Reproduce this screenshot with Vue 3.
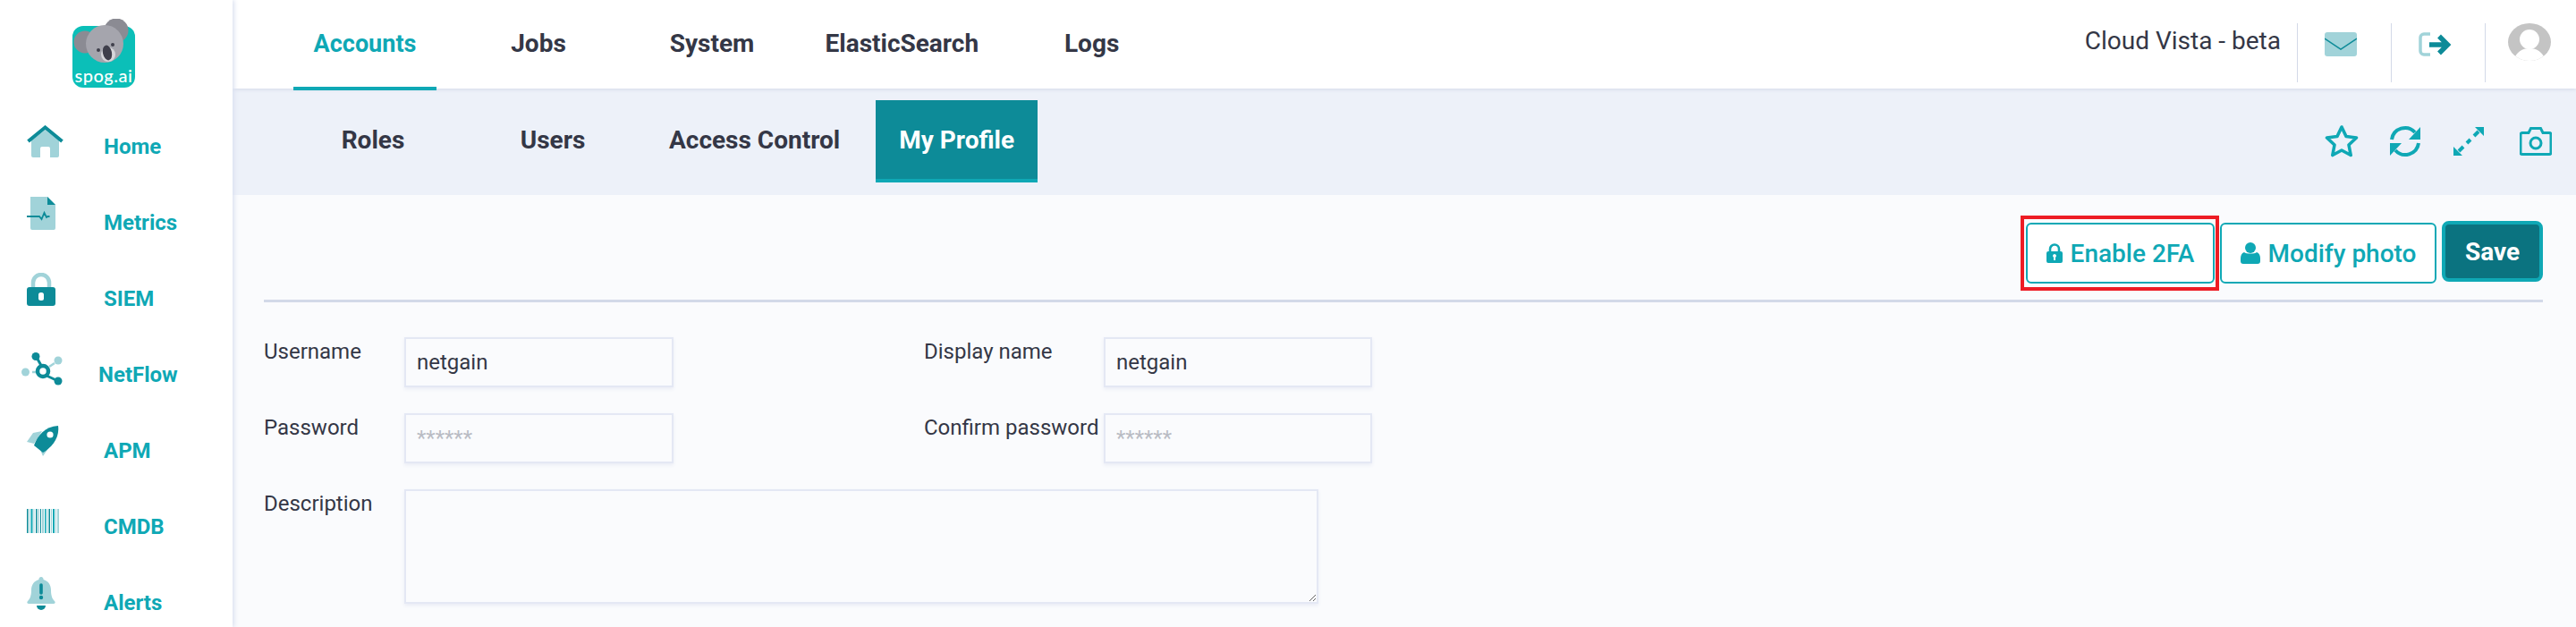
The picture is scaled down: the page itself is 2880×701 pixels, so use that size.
<script setup>
const topTabs = ["Accounts", "Jobs", "System", "ElasticSearch", "Logs"];
const subTabs = ["Roles", "Users", "Access Control", "My Profile"];
const menu = ["Home", "Metrics", "SIEM", "NetFlow", "APM", "CMDB", "Alerts"];

// barcode stripes for the CMDB icon: x, width, colour
const bars = [
  [0, 1.5, "#0d8b98"], [2.5, 1, "#a1d3d9"], [4.5, 2, "#0fa8b5"], [7.5, 1, "#a1d3d9"],
  [10, 1.5, "#0d8b98"], [12.5, 1.5, "#a1d3d9"], [15, 1, "#0d8b98"], [17, 2, "#a1d3d9"],
  [20, 1.5, "#0fa8b5"], [22.5, 1, "#a1d3d9"], [24.5, 1.5, "#0d8b98"], [27, 1, "#a1d3d9"],
  [29, 2, "#0fa8b5"], [32, 1, "#a1d3d9"], [34, 2, "#a1d3d9"],
];
</script>

<template>
  <div class="page">
    <aside class="sidebar">
      <div class="logo">
        <svg width="72" height="78" viewBox="0 0 72 78">
          <rect x="1" y="8" width="70" height="69" rx="12" fill="#0bbfb8" />
          <circle cx="50" cy="13" r="13.500" fill="#8b8b93" />
          <circle cx="15" cy="26" r="12.500" fill="#8b8b93" />
          <circle cx="37" cy="28" r="21" fill="#a5a5ad" />
          <circle cx="30" cy="35" r="2" fill="#3f3f4b" />
          <circle cx="46" cy="29" r="2" fill="#3f3f4b" />
          <ellipse cx="41" cy="40" rx="8" ry="8" fill="#d6d6da" />
          <ellipse cx="40" cy="38" rx="5" ry="8.500" transform="rotate(-12 40 38)" fill="#3f3f4b" />
          <text x="36" y="71" class="logo-text" text-anchor="middle">spog.ai</text>
        </svg>
      </div>
      <nav class="menu">
        <a v-for="m in menu" :key="m" class="menu-item" :class="'m-' + m.toLowerCase()">
          <span class="menu-icon">
            <svg v-if="m === 'Home'" width="41" height="36" viewBox="0 0 41 36">
              <path d="M5 17 20.5 5.5 36 17v17a2 2 0 0 1-2 2h-8V26a2 2 0 0 0-2-2h-7a2 2 0 0 0-2 2v10H7a2 2 0 0 1-2-2z" fill="#a1d3d9" />
              <path d="M1.5 18 20.5 2.5l19 15.500" fill="none" stroke="#0d8b98" stroke-width="4" />
            </svg>
            <svg v-else-if="m === 'Metrics'" width="32" height="37" viewBox="0 0 32 37">
              <path d="M6 0h17l9 9v26a2 2 0 0 1-2 2H6a2 2 0 0 1-2-2V0z" fill="#a1d3d9" />
              <path d="M23 0l9 9h-9z" fill="#0d8b98" />
              <path d="M0 22h14l2.500 3 3-7 2.500 5 1.500-1h2" fill="none" stroke="#0d8b98" stroke-width="1.800" />
            </svg>
            <svg v-else-if="m === 'SIEM'" width="32" height="37" viewBox="0 0 32 37">
              <path d="M7 17V11a9 9 0 0 1 18 0v6" fill="none" stroke="#a1d3d9" stroke-width="4.500" />
              <rect x="0" y="16" width="32" height="21" rx="3" fill="#0d8b98" />
              <rect x="13" y="22" width="6" height="9" rx="2.500" fill="#fff" />
            </svg>
            <svg v-else-if="m === 'NetFlow'" width="46" height="37" viewBox="0 0 46 37">
              <path d="M12 22h6M31 16l6-4" stroke="#a1d3d9" stroke-width="2.500" />
              <circle cx="4.500" cy="22" r="4.500" fill="#a1d3d9" />
              <circle cx="41" cy="9" r="4.500" fill="#a1d3d9" />
              <path d="M16 4l8 14M28 26l13 6" stroke="#0d8b98" stroke-width="3" />
              <circle cx="16" cy="4.500" r="4.500" fill="#0d8b98" />
              <circle cx="41" cy="32" r="4.500" fill="#0d8b98" />
              <circle cx="24" cy="21" r="6" fill="#fff" stroke="#0d8b98" stroke-width="4.500" />
            </svg>
            <svg v-else-if="m === 'APM'" width="36" height="36" viewBox="0 0 36 36">
              <path d="M7 9 17 7 8 21 0 19zM27 22 18 35 15 28z" fill="#a1d3d9" />
              <path d="M8 23C12 12 20 2 35 1 37 14 28 25 18 31z" fill="#0d8b98" />
              <circle cx="26" cy="11" r="3.600" fill="#fff" />
            </svg>
            <svg v-else-if="m === 'CMDB'" width="36" height="27" viewBox="0 0 36 27">
              <rect v-for="(b, i) in bars" :key="i" :x="b[0]" y="0" :width="b[1]" height="27" :fill="b[2]" />
            </svg>
            <svg v-else width="32" height="37" viewBox="0 0 32 37">
              <path d="M16 0a2.500 2.500 0 0 1 2.500 3C24 4.500 27 9 27 15c0 7 2 10 4 12 1 1 1 3-1 3H2c-2 0-2-2-1-3 2-2 4-5 4-12 0-6 3-10.500 8.500-12A2.500 2.500 0 0 1 16 0z" fill="#a1d3d9" />
              <path d="M16 9v9" stroke="#0d8b98" stroke-width="3.600" stroke-linecap="round" />
              <circle cx="16" cy="23" r="2.200" fill="#0d8b98" />
              <path d="M11 32h10a5 5 0 0 1-10 0z" fill="#0d8b98" />
            </svg>
          </span>
          <span class="menu-label">{{ m }}</span>
        </a>
      </nav>
    </aside>

    <div class="main">
      <header class="topbar">
        <nav class="top-tabs">
          <a v-for="(t, i) in topTabs" :key="t" class="top-tab" :class="{ active: i === 0 }">{{ t }}</a>
        </nav>
        <div class="top-right">
          <span class="org">Cloud Vista - beta</span>
          <span class="top-cell">
            <svg width="36" height="27" viewBox="0 0 36 27">
              <rect width="36" height="27" rx="3" fill="#a1d3d9" />
              <path d="M0 7 18 19 36 7" fill="none" stroke="#0d8b98" stroke-width="1.500" />
            </svg>
          </span>
          <span class="top-cell">
            <svg width="37" height="27" viewBox="0 0 37 27">
              <path d="M13 2H6a4 4 0 0 0-4 4v15a4 4 0 0 0 4 4h7" fill="none" stroke="#a1d3d9" stroke-width="3.500" />
              <path d="M12 14h20M23 4.500 32.500 14 23 23.500" fill="none" stroke="#0d8b98" stroke-width="5.500" />
            </svg>
          </span>
          <span class="top-cell avatar-cell">
            <svg width="48" height="42" viewBox="0 0 48 42">
              <defs>
                <clipPath id="avatar-clip"><ellipse cx="24" cy="21" rx="24" ry="21" /></clipPath>
              </defs>
              <g clip-path="url(#avatar-clip)">
                <rect width="48" height="42" fill="#c4c4c4" />
                <ellipse cx="24" cy="18" rx="11" ry="11" fill="#fff" />
                <path d="M6 42C9 32 16 28 24 28s15 4 18 14z" fill="#fff" />
              </g>
            </svg>
          </span>
        </div>
      </header>

      <div class="subbar">
        <nav class="sub-tabs">
          <a v-for="(t, i) in subTabs" :key="t" class="sub-tab" :class="{ active: i === 3 }">{{ t }}</a>
        </nav>
        <div class="sub-icons">
          <svg width="38" height="38" viewBox="0 0 38 38">
            <path d="M19 3l5 10.500 11.500 1.500-8.500 8 2.200 11.500L19 29l-10.200 5.500L11 23l-8.500-8L14 13.500z" fill="none" stroke="#0fa8b5" stroke-width="3.600" stroke-linejoin="round" />
          </svg>
          <svg width="36" height="36" viewBox="0 0 36 36">
            <path d="M3 16A15 15 0 0 1 29 8M33 20A15 15 0 0 1 7 28" fill="none" stroke="#0fa8b5" stroke-width="4" />
            <path d="M35 2v14H22zM1 34V20h13z" fill="#0fa8b5" />
          </svg>
          <svg width="34" height="32" viewBox="0 0 34 32">
            <path d="M24 0h10v10zM10 32H0V22z" fill="#0fa8b5" />
            <path d="M28 5l-5 5M19 14l-4 4M11 22l-5 5" stroke="#0fa8b5" stroke-width="4" fill="none" />
          </svg>
          <svg width="36" height="32" viewBox="0 0 36 32">
            <path d="M3 6.500h7l2.500-5h11l2.500 5h7a2 2 0 0 1 2 2v20a2 2 0 0 1-2 2H3a2 2 0 0 1-2-2v-20a2 2 0 0 1 2-2z" fill="none" stroke="#0fa8b5" stroke-width="3" />
            <circle cx="18" cy="18" r="6" fill="none" stroke="#0fa8b5" stroke-width="3" />
          </svg>
        </div>
      </div>

      <section class="content">
        <div class="toolbar">
          <button class="btn marked">
            <svg width="18" height="22" viewBox="0 0 18 22">
              <path d="M4 10V6.500a5 5 0 0 1 10 0V10" fill="none" stroke="#0fa8b5" stroke-width="2.600" />
              <path d="M2 9h14a2 2 0 0 1 2 2v9a2 2 0 0 1-2 2H2a2 2 0 0 1-2-2v-9a2 2 0 0 1 2-2zm7 3a2 2 0 0 0-1 3.700V19h2v-3.300A2 2 0 0 0 9 12z" fill="#0fa8b5" fill-rule="evenodd" />
            </svg>
            Enable 2FA
          </button>
          <button class="btn modify">
            <svg width="22" height="24" viewBox="0 0 22 24">
              <circle cx="11" cy="6" r="6" fill="#0fa8b5" />
              <path d="M4 11c2 2 12 2 14 0 3 1 4 4 4 7v3a3 3 0 0 1-3 3H3a3 3 0 0 1-3-3v-3c0-3 1-6 4-7z" fill="#0fa8b5" />
            </svg>
            Modify photo
          </button>
          <button class="btn save">Save</button>
        </div>
        <hr class="rule" />
        <form class="form" @submit.prevent>
          <label>Username</label>
          <input type="text" value="netgain" />
          <span></span>
          <label>Display name</label>
          <input type="text" value="netgain" />
          <label>Password</label>
          <input type="password" placeholder="******" />
          <span></span>
          <label>Confirm password</label>
          <input type="password" placeholder="******" />
          <label>Description</label>
          <textarea></textarea>
        </form>
      </section>
    </div>
  </div>
</template>

<style>
html, body {
  margin: 0;
  overflow: hidden;
  background: #fff;
}
</style>

<style scoped>
.page {
  display: flex;
  height: 100vh;
  font-family: Roboto, "Liberation Sans", sans-serif;
  color: #343746;
}
.sidebar {
  width: 260px;
  flex: none;
  background: #fff;
  box-shadow: 2px 0 5px #dbe1f0;
  position: relative;
  z-index: 2;
}
.logo {
  padding: 21px 0 0 80px;
  height: 100px;
  line-height: 0;
}
.logo-text {
  font-family: Lato, Roboto, sans-serif;
  font-size: 20px;
  font-weight: 500;
  letter-spacing: 0.5px;
  fill: #fff;
}
.menu {
  display: flex;
  flex-direction: column;
}
.menu-item {
  position: relative;
  height: 85px;
  display: flex;
  align-items: center;
  padding-left: 116px;
  color: #0fa8b5;
  font-size: 24px;
  font-weight: 700;
  box-sizing: border-box;
}
.m-netflow {
  padding-left: 110px;
}
.menu-icon {
  position: absolute;
  left: 30px;
  top: 14px;
  line-height: 0;
}
.m-home .menu-icon { top: 19px; }
.m-netflow .menu-icon { left: 24px; top: 18px; }
.m-cmdb .menu-icon { top: 23px; }

.main {
  flex: 1;
  min-width: 0;
  display: flex;
  flex-direction: column;
  background: #fafbfd;
}
.topbar {
  height: 99px;
  flex: none;
  background: #fff;
  display: flex;
  justify-content: space-between;
  box-shadow: 0 1px 4px #d3d9e8;
  position: relative;
  z-index: 1;
}
.top-tabs {
  display: flex;
  gap: 34px;
  padding-left: 68px;
}
.top-tab {
  min-width: 160px;
  height: 101px;
  padding: 0 12.500px 4px;
  box-sizing: border-box;
  display: flex;
  align-items: center;
  justify-content: center;
  font-size: 28px;
  font-weight: 700;
}
.top-tab.active {
  color: #0fa8b5;
  font-size: 27px;
  border-bottom: 4px solid #0fa8b5;
  padding-bottom: 0;
}
.top-right {
  display: flex;
  align-items: flex-start;
  padding: 26px 28px 0 0;
}
.org {
  font-size: 28px;
  line-height: 40px;
  margin-right: 18px;
}
.top-cell {
  width: 105px;
  height: 66px;
  box-sizing: border-box;
  border-left: 1px solid #d3d9e8;
  padding: 10px 0 0 30px;
  line-height: 0;
}
.avatar-cell {
  width: 74px;
  padding: 0 0 0 25px;
}
.subbar {
  height: 119px;
  flex: none;
  background: #edf1f9;
  display: flex;
  justify-content: space-between;
}
.sub-tabs {
  display: flex;
  gap: 14px;
  padding: 13px 0 0 67px;
}
.sub-tab {
  min-width: 180px;
  height: 92px;
  padding: 0 26px 4px;
  box-sizing: border-box;
  display: flex;
  align-items: center;
  justify-content: center;
  font-size: 28px;
  font-weight: 700;
}
.sub-tab:first-child {
  margin-right: 7px;
}
.sub-tab.active {
  background: #0d8b98;
  color: #fff;
  border-bottom: 4px solid #0fa8b5;
  padding-bottom: 0;
}
.sub-icons {
  display: grid;
  grid-template-columns: 72px 72px 74px 36px;
  align-items: center;
  padding: 0 27px 0 0;
  margin-top: -2px;
}
.content {
  flex: 1;
  padding: 31px 37px 0 35px;
}
.toolbar {
  display: flex;
  justify-content: flex-end;
  align-items: flex-start;
  gap: 6px;
}
.btn {
  height: 68px;
  padding: 0;
  box-sizing: border-box;
  display: flex;
  align-items: center;
  justify-content: center;
  gap: 9px;
  width: 211px;
  background: #fff;
  border: 2px solid #0fa8b5;
  border-radius: 6px;
  color: #0fa8b5;
  font-family: inherit;
  font-size: 28px;
  font-weight: 500;
}
.modify {
  width: 242px;
}
.marked {
  position: relative;
}
.marked::after {
  content: "";
  position: absolute;
  left: -8px;
  right: -7px;
  top: -10px;
  bottom: -10px;
  border: 4px solid #ed1c24;
}
.save {
  width: 113px;
  margin-top: -2px;
  background: #0b7380;
  border-width: 4px;
  border-radius: 8px;
  color: #fff;
  font-weight: 700;
}
.rule {
  margin: 18px 0 0;
  border: 0;
  height: 3px;
  background: #d3d9e8;
}
.form {
  display: grid;
  grid-template-columns: 157px 301px 280px 201px 300px;
  grid-auto-rows: 56px;
  row-gap: 29px;
  margin-top: 39px;
  font-size: 24px;
}
.form label {
  line-height: 32px;
  white-space: nowrap;
}
.form input,
.form textarea {
  width: 100%;
  box-sizing: border-box;
  margin: 0;
  border: 2px solid #e4e8f4;
  border-radius: 0;
  background: #fafbfd;
  box-shadow: 0 2px 4px #e9ecf5;
  padding: 0 12px;
  font-family: inherit;
  font-size: 24px;
  color: #343746;
  outline: none;
}
.form input::placeholder {
  color: #b9bcc4;
  opacity: 1;
}
.form textarea {
  grid-column: span 4;
  width: 1022px;
  height: 128px;
}
</style>
